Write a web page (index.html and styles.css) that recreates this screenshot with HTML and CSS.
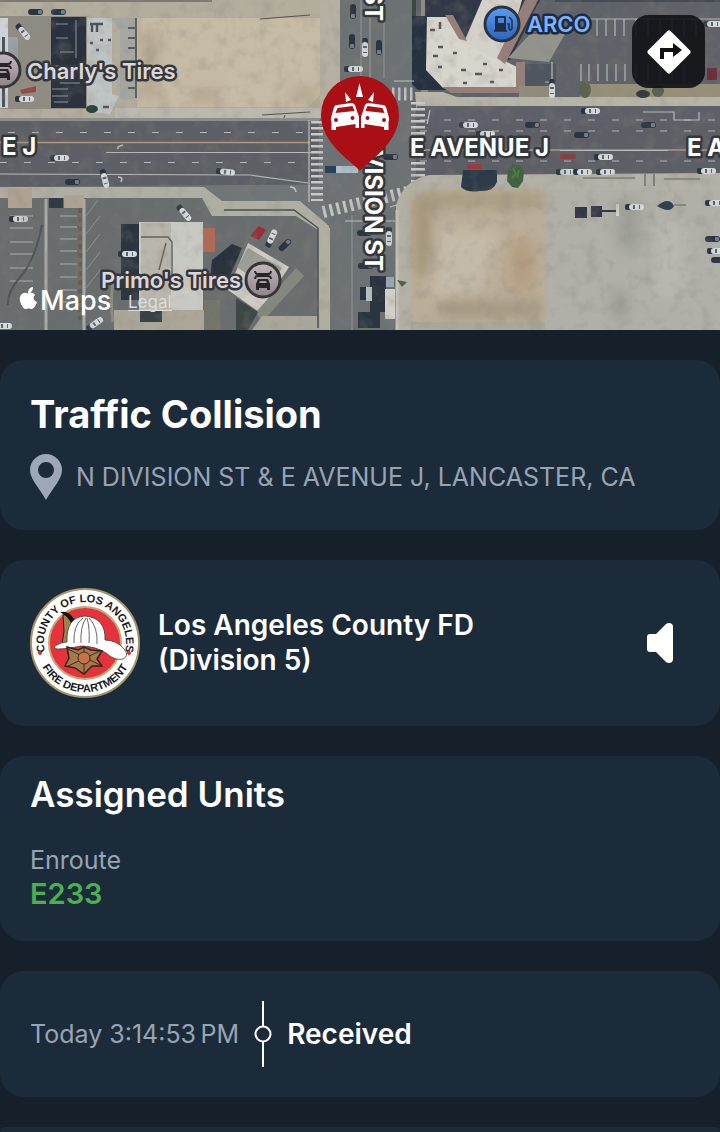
FILE: index.html
```
<!DOCTYPE html>
<html lang="en">
<head>
	<meta charset="UTF-8">
	<meta name="viewport" content="width=device-width, initial-scale=1">
	<title>Traffic Collision</title>
	<link rel="stylesheet" href="styles.css">
</head>
<body>

<header class="map">
	<svg class="map_view" viewBox="0 0 720 330" preserveAspectRatio="xMidYMid slice" role="img" aria-label="Map of N Division St and E Avenue J">
		<defs>
			<filter id="grain" x="0" y="0" width="100%" height="100%">
				<feTurbulence type="fractalNoise" baseFrequency="0.07" numOctaves="5" seed="4"/>
				<feColorMatrix values="0 0 0 0 0.25  0 0 0 0 0.23  0 0 0 0 0.2  2 0 0 0 -0.95"/>
			</filter>
			<filter id="soft"><feGaussianBlur stdDeviation="0.6"/></filter>
			<filter id="patch"><feGaussianBlur stdDeviation="7"/></filter>
			<linearGradient id="service" x1="0" y1="0" x2="0" y2="1">
				<stop offset="0" stop-color="#c3b8bd"/>
				<stop offset="1" stop-color="#8e8489"/>
			</linearGradient>
			<linearGradient id="fuel" x1="0" y1="0" x2="0" y2="1">
				<stop offset="0" stop-color="#5c9df0"/>
				<stop offset="1" stop-color="#2d62b8"/>
			</linearGradient>
			<!-- parked or driving car, facing right -->
			<g id="car">
				<rect x="-11" y="-3" width="12" height="6" rx="2" fill="#2c3540"/>
				<rect x="-7" y="-3" width="15" height="6" rx="3" fill="#d5d9db"/>
				<rect x="-3" y="-2" width="2" height="4" fill="#59626b"/>
				<rect x="3" y="-2" width="1" height="4" fill="#59626b"/>
			</g>
			<g id="darkcar">
				<rect x="-9" y="-3" width="15" height="6" rx="3" fill="#2b3642"/>
				<rect x="1" y="-2" width="4" height="4" rx="1" fill="#737d86"/>
			</g>
			<g id="wrench">
				<path d="M-8-9q0 3 3 3H5q3 0 3-3M-8-1q0-3 3-3H5q3 0 3 3" fill="none" stroke="#28242a" stroke-width="1.800"/>
				<path d="M-7 10V4l2-5H5l2 5v6H4V8h-8v2zM-4 3h8L3 1h-6z" fill="#28242a" fill-rule="evenodd"/>
			</g>
		</defs>

		<g filter="url(#soft)">
			<rect width="720" height="330" fill="#707477"/>

			<!-- north west block -->
			<rect width="338" height="122" fill="#b3ad9e"/>
			<rect y="16" width="87" height="93" fill="#8f8c83"/>
			<rect y="0" width="212" height="2" fill="#7b7a73"/>
			<rect x="51" y="17" width="35" height="91" fill="#2b333e"/>
			<path d="M56 24h12M56 38h12M60 52h14M52 66h15M60 83h20M52 89h16M52 96h16M54 102h14M76 20v38" stroke="#68747e" stroke-width="1.500"/>
			<rect y="18" width="8" height="90" fill="#ced2d6"/>
			<rect x="8" y="37" width="10" height="45" fill="#9ba0a4"/>
			<rect x="2" y="37" width="3" height="70" fill="#4c535b"/>
			<path d="M87 18h25v76l7 2-9 18-20-2-3-7z" fill="#bfc4c4"/>
			<path d="M90 24h13M92 24v8M97 24v8M90 43h3M100 40h3M96 50h3M108 40h3M103 107h6" stroke="#4d5357" stroke-width="2.500"/>
			<path d="M112 18h23v81h-15V30z" fill="#a5a7a2"/>
			<path d="M136 18v80M128 28h7M128 38h7M128 48h7M128 88h7" stroke="#3c4145" stroke-width="1.500" fill="none"/>
			<path d="M137 18h183v77l-12 12H137z" fill="#c6bba5"/>
			<path d="M115 108h205v10H115z" fill="#bbb9ae"/>
			<g filter="url(#patch)" opacity=".5">
				<path d="M142 30h14v70h-14z" fill="#988b75"/>
				<path d="M190 90h30v12h-30zM290 88h28v14h-28z" fill="#9e9276"/>
			</g>
			<path d="M260 19l50-4M262 115l48-3M285 115l-4 12" stroke="#555247" stroke-width="1"/>
			<rect x="320" width="20" height="118" fill="#b5b0a2"/>
			<ellipse cx="92" cy="109" rx="6" ry="4" fill="#2b4340"/>
			<use href="#darkcar" x="37" y="12"/>
			<use href="#darkcar" x="60" y="12"/>
			<use href="#car" transform="translate(24 33) rotate(50)"/>
			<use href="#car" x="26" y="99"/>
			<path d="M20 90l16-4v6l-14 2z" fill="#944b45"/>

			<!-- north east block -->
			<rect x="412" width="308" height="108" fill="#5e6267"/>
			<rect x="421" width="7" height="98" fill="#8d8b83"/>
			<path d="M425 0h115l-30 60H425z" fill="#323946"/>
			<path d="M395 16h31v52l22 22h-30l-23-22z" fill="#263040"/>
			<path d="M427 17h22l18 25 52 26v20h-76l-17-18z" fill="#d8d5cd"/>
			<path d="M482 0h40l-18 64-40-22z" fill="#d3d1ca"/>
			<path d="M525 0h13l-33 64-8-6zM445 15h8l14 26-8-2zM442 87h77v6h-68zM516 62h9v31h-9z" fill="#957f78"/>
			<path d="M508 58l22-24h35l-16 28z" fill="#92948b"/>
			<path d="M525 64h31v22h-31z" fill="#50565e"/>
			<path d="M430 30h5M440 22v7M438 47h5M453 53h4M433 56h5M438 67h4M461 70h5M475 74h7M483 64h4M490 82h4M463 83h4M499 70h4" stroke="#5a5653" stroke-width="2.500"/>
			<path d="M398 0h18v16h-18z" fill="#3a4542"/>
			<path d="M584 19h136M597 19v17M606 19v17M615 19v17M624 19v17M636 19v17M648 19v17M660 19v17M672 19v17M684 19v17M696 19v17M581 64v17M589 64v17M598 64v17M607 64v17M616 64v17M625 64v17M636 64v17M648 64v17M660 64v17M672 64v17M684 64v17M552 62v22M545 82h10" stroke="#b4b8b8" stroke-width="1.200" fill="none"/>
			<rect x="555" width="165" height="2" fill="#444b52"/>
			<path d="M580 84h140v13H580z" fill="#969078"/>
			<path d="M519 86h30v11h-30z" fill="#8f8c7c"/>
			<path d="M415 92h28l14 5h263v10H441l-24 12z" fill="#b7b4a8"/>
			<ellipse cx="585" cy="90" rx="6" ry="8" fill="#5c6250"/>
			<ellipse cx="658" cy="91" rx="6" ry="6" fill="#545e4b"/>
			<ellipse cx="643" cy="94" rx="7" ry="4" fill="#333b40"/>
			<use href="#car" transform="translate(552 90) rotate(90)"/>
			<use href="#car" x="714" y="24"/>
			<path d="M707 68h10v12h-10z" fill="#6e2f3b"/>

			<!-- avenue -->
			<path d="M0 120h720v61L0 187z" fill="#5b5f65"/>
			<path d="M417 106h303v17H413z" fill="#5d6167"/>
			<rect y="118" width="325" height="3" fill="#8c8e8c"/>
			<path d="M0 142.500h310M420 150h300" stroke="#b1987c" stroke-width="1.500"/>
			<path d="M106 152.500h205M0 174l250 1M250 175l58 8M560 150.500h108M643 112h31v8h25v-8" stroke="#b7bab9" stroke-width="1.200" fill="none"/>
			<path d="M8 132.500h300M420 120h300M420 131h300" stroke="#b3b8bb" stroke-width="1.200" stroke-dasharray="7 17"/>
			<path d="M0 162.500h310M420 161h300" stroke="#b3b8bb" stroke-width="1.200" stroke-dasharray="7 17"/>
			<path d="M118 149c-1-3 3-3 5-4M118 177c5 0 4 3 3 5M290 187c5 0 5 2 6 5" stroke="#c2c5c5" stroke-width="1.500" fill="none"/>
			<use href="#car" x="61" y="158"/>
			<use href="#car" transform="translate(227 172) rotate(6)"/>
			<use href="#darkcar" x="74" y="182"/>
			<use href="#car" x="592" y="111"/>
			<use href="#darkcar" x="534" y="125"/>
			<use href="#darkcar" x="650" y="125"/>
			<use href="#car" x="470" y="125"/>
			<use href="#car" x="487" y="134"/>
			<use href="#darkcar" x="583" y="135"/>
			<use href="#car" x="605" y="157"/>
			<path d="M560 154h16v5h-16z" fill="#84403f"/>

			<!-- division street -->
			<path d="M340 0h72v106l4 18v52l-14 24v130h-73V210l-10-20v-70l21-12z" fill="#6c7173"/>
			<path d="M361 0v78M352 215v115M384 0v78" stroke="#8f969a" stroke-width="1"/>
			<path d="M370 0v78" stroke="#a4947f" stroke-width="1.200"/>
			<use href="#darkcar" transform="translate(353 13) rotate(90)"/>
			<use href="#darkcar" transform="translate(352 43) rotate(90)"/>
			<use href="#car" transform="translate(365 49) rotate(90)"/>
			<use href="#darkcar" transform="translate(379 49) rotate(90)"/>
			<use href="#car" x="355" y="69"/>
			<path d="M317 121v80" stroke="#c7cac9" stroke-width="12" stroke-dasharray="2.500 3.500"/>
			<path d="M418 102v80" stroke="#c7cac9" stroke-width="14" stroke-dasharray="2.500 3.500"/>
			<path d="M392 94h22" stroke="#bfc3c3" stroke-width="13" stroke-dasharray="2.500 3.500"/>
			<path d="M323 212l84-20" stroke="#c3c6c5" stroke-width="12" stroke-dasharray="3 4"/>
			<path d="M309 120v82M394 81h20M430 110l-3 14M345 221h50M390 207l17-5" stroke="#c0c4c4" stroke-width="1.200"/>
			<path d="M325 166h20v7h-20z" fill="#2c4056"/>
			<path d="M336 166h22v7h-22z" fill="#aebdc7"/>
			<use href="#darkcar" x="392" y="157"/>

			<!-- south west block -->
			<path d="M0 187h204l18 14h78l29 25v104H0z" fill="#aeaea3"/>
			<path d="M0 198h202l10 18h84l22 14v100H0z" fill="#696d6e"/>
			<path d="M8 188h24v20H8zM64 195h20v13H64z" fill="#b0a292"/>
			<path d="M10 228h23M10 242h23M10 216h23M10 254h23M10 268h23M10 281h23M60 216h17M60 227h17M60 239h17M60 251h17M60 264h17M60 277h17M60 290h17M60 302h17" stroke="#a9adae" stroke-width="1.200"/>
			<path d="M46 199v131M84 199v131" stroke="#a9aba5" stroke-width="3"/>
			<path d="M80 208v112" stroke="#665e49" stroke-width="4" stroke-dasharray="5 4"/>
			<path d="M86 216l12-16M86 234l14-18M86 252l14-18M86 270l14-18M86 288l14-18" stroke="#8d918c" stroke-width="1"/>
			<path d="M42 225q-7 35-21 51T8 305" stroke="#4e5458" stroke-width="2" fill="none"/>
			<path d="M49 198h14v10H49z" fill="#2d3a45"/>
			<path d="M121 224h18v76h-18z" fill="#2b353f"/>
			<path d="M139 222h64v88h-64z" fill="#c9c9c3"/>
			<path d="M141 223h30v86h-30z" fill="#b9b6ac"/>
			<path d="M166 243l-7 27M141 237h27l4 5v38" stroke="#62645f" stroke-width="1.500" fill="none"/>
			<path d="M203 228h12v24h-12z" fill="#b06a55"/>
			<path d="M114 310h90v20h-90z" fill="#aba698"/>
			<path d="M140 310h22v12h-22z" fill="#39424a"/>
			<path d="M113 322q-3-20 0-40" stroke="#8d8b80" stroke-width="3" fill="none"/>
			<path d="M212 260l20-16 10 4-18 42-14-10z" fill="#2b333c"/>
			<path d="M248 243l41 24-30 45-31-22z" fill="#ceccc4"/>
			<path d="M248 248l34 20-14 21-31-22z" fill="#9b9f96"/>
			<path d="M256 312l40-44 8 8-42 46z" fill="#84877d"/>
			<path d="M252 330l10-14h60v14z" fill="#a9a79a"/>
			<path d="M224 210h70l24 18v100" stroke="#474f54" stroke-width="1.500" fill="none"/>
			<path d="M204 300h16v30h-16z" fill="#73756a"/>
			<path d="M236 298l22 14-10 18h-12z" fill="#3d4744"/>
			<use href="#darkcar" transform="translate(286 244) rotate(-45)"/>
			<path d="M250 236l9-10 7 4-7 10z" fill="#9b2d34"/>
			<use href="#car" transform="translate(272 237) rotate(-65)"/>
			<use href="#car" transform="translate(185 214) rotate(50)"/>
			<use href="#car" transform="translate(105 180) rotate(75)"/>
			<use href="#car" x="20" y="219"/>
			<use href="#car" x="129" y="254"/>
			<use href="#car" transform="translate(96 323) rotate(-35)"/>
			<use href="#car" x="4" y="326"/>
			<path d="M320 228h10v102h-10z" fill="#b1aea2"/>

			<!-- south east block -->
			<path d="M396 205q8-26 34-30l290-2v157H396z" fill="#b4b1a6"/>
			<path d="M397 210v120" stroke="#c5c2b7" stroke-width="3"/>
			<path d="M411 205q3-14 20-15h114v140H411z" fill="#bbae98"/>
			<path d="M545 190h175v140H545z" fill="#b0b0a8"/>
			<g filter="url(#patch)" opacity=".75">
				<path d="M414 195h128v10H430v70h-14z" fill="#96896a"/>
				<path d="M440 302h100v14h-100z" fill="#9a8c72"/>
				<path d="M440 230l60 0-20 60-50 10z" fill="#c8bfae"/>
				<path d="M510 240h24v50h-24z" fill="#b29879"/>
				<path d="M618 200h22v50h-22zM612 290h16v30h-16z" fill="#959891"/>
				<path d="M655 220h30v80h-30z" fill="#babab1"/>
			</g>
			<path d="M411 322h134v8H411z" fill="#aaa89c"/>
			<path d="M463 170h34v12q-4 10-17 9-13 2-19-4z" fill="#2e3a47"/>
			<path d="M467 164h14v5h-14z" fill="#993b40"/>
			<path d="M508 168l5-4 6 1 5 6-1 10-5 7-6-1-5-6z" fill="#41623f"/>
			<path d="M513 168l3 6-4 4M519 170l-2 8" stroke="#53784d" stroke-width="2" fill="none"/>
			<path d="M575 207h12v11h-12zM591 206h11v11h-11zM602 210h16v2h-16z" fill="#313945"/>
			<rect x="616" y="204" width="3" height="12" fill="#d1d2ce"/>
			<path d="M657 206q12-10 17 0-4 8-17 0z" fill="#33414e"/>
			<path d="M674 205h12M583 178h52M645 174v12M654 174v12M664 179h36" stroke="#5f6361" stroke-width="1.200"/>
			<use href="#car" x="636" y="207"/>
			<use href="#car" x="567" y="172"/>
			<use href="#car" x="584" y="172"/>
			<use href="#car" x="607" y="172"/>
			<use href="#car" x="708" y="171"/>
			<use href="#car" x="716" y="203"/>
			<use href="#darkcar" x="714" y="239"/>
			<use href="#car" x="718" y="251"/>
			<use href="#darkcar" x="720" y="260"/>
			<use href="#darkcar" x="366" y="233"/>
			<use href="#car" transform="translate(389 238) rotate(90)"/>
			<use href="#darkcar" x="367" y="266"/>
			<path d="M370 276h16v36h-16zM358 312h22v16h-22zM360 287h12v13h-12z" fill="#2c3641"/>
			<path d="M385 289h10v30h-10z" fill="#d2d0ca"/>
			<rect x="386" y="277" width="8" height="10" fill="#97a6b0"/>
			<rect x="366" y="287" width="6" height="14" fill="#b4bdc3"/>
			<path d="M397 280l10 2-5 5z" fill="#50634c"/>
		</g>
		<rect width="720" height="330" filter="url(#grain)" opacity=".35"/>

		<!-- street names -->
		<g class="street">
			<text x="2" y="155">E J</text>
			<text x="410" y="156">E AVENUE J</text>
			<text x="687" y="156">E A</text>
			<text transform="translate(365 271) rotate(90)" text-anchor="end">N DIVISION ST</text>
			<text transform="translate(365 21) rotate(90)" text-anchor="end">ST</text>
		</g>

		<!-- places -->
		<circle cx="3" cy="70" r="17" fill="url(#service)" stroke="#37343a" stroke-width="3"/>
		<use href="#wrench" x="3" y="70"/>
		<text class="place" x="27" y="79">Charly's Tires</text>
		<circle cx="263" cy="280" r="17" fill="url(#service)" stroke="#37343a" stroke-width="3"/>
		<use href="#wrench" x="263" y="280"/>
		<text class="place" x="101" y="288">Primo's Tires</text>
		<circle cx="502" cy="24" r="17" fill="url(#fuel)" stroke="#263446" stroke-width="3"/>
		<path d="M495 31V17q0-1 1-1h9q1 0 1 1v14zM498 18v5h6v-5z" fill="#1e2e48" fill-rule="evenodd"/>
		<path d="M494 31h13M507 24h2v4q0 2 1.500 2t1.500-2v-8l-3-3" fill="none" stroke="#1e2e48" stroke-width="1.500"/>
		<text class="place fuel" x="527" y="32">ARCO</text>

		<!-- map brand -->
		<path d="M35 295c-2-3-5-3-7-1.500-2-1-4-1-6 .5-4 3-2 10 1.500 14 2 2 3 .5 5 .5s3 1.500 5-.5c2-2 3-4 3.500-6-4-1.500-4-5-2-7zM28 293c0-3 2-6 5-6 .3 3-2 6-5 6z" fill="#fff"/>
		<text class="brand" x="40" y="310">Maps</text>
		<a href="#legal">
			<text class="legal" x="128" y="308">Legal</text>
			<path d="M128 310.500h44" stroke="#dcdedd"/>
		</a>

		<!-- incident marker -->
		<path d="M360 171c-6-8-39-27-39-56a39 39 0 0 1 78 0c0 29-33 48-39 56z" fill="#a90f14"/>
		<g fill="#fff">
			<path d="M359.500 83l3.500 14h-7zM345 92l6 8-5 2zM374 92l-1 10-5-2z"/>
			<path id="crashcar" fill-rule="evenodd" d="M331 118l3-11q1-2 3-2l14-2q3 0 4 2l3 9q1 2 1 4v10h-3.500v-4L336 127v3h-4.500v-8q-1-2-.500-4zM335.500 113l19-2-2-5-15 2zM334 120a2 2 0 1 0 4 0a2 2 0 1 0-4 0zM350.500 118a2 2 0 1 0 4 0a2 2 0 1 0-4 0z"/>
			<use href="#crashcar" transform="translate(720 0) scale(-1 1)"/>
		</g>
	</svg>
	<button class="directions" type="button" aria-label="Directions">
		<svg viewBox="0 0 46 46" width="46" height="46">
			<path d="M21.500 2Q23 .5 24.500 2L44 21.500q1.500 1.500 0 3L24.500 44q-1.500 1.500-3 0L2 24.500q-1.500-1.500 0-3z" fill="#fff"/>
			<path d="M16 30v-9h11" fill="none" stroke="#111" stroke-width="4"/>
			<path d="M27 14l9 7-9 7z" fill="#111"/>
		</svg>
	</button>
</header>

<main class="cards">
	<section class="card incident">
		<h1>Traffic Collision</h1>
		<p class="address">
			<svg viewBox="0 0 32 46" width="32" height="46" aria-hidden="true">
				<path fill="#9ca8b6" fill-rule="evenodd" d="M16 0a16 16 0 0 1 16 16c0 9-8 16-16 30C8 32 0 25 0 16A16 16 0 0 1 16 0zM8 16a8 8 0 1 0 16 0a8 8 0 1 0-16 0z"/>
			</svg>
			<span>N DIVISION ST &amp; E AVENUE J, LANCASTER, CA</span>
		</p>
	</section>

	<section class="card agency">
		<svg class="seal" viewBox="0 0 110 110" width="110" height="110" role="img" aria-label="County of Los Angeles Fire Department">
			<defs>
				<path id="top_arc" d="M15 64A41 41 0 1 1 95 64"/>
				<path id="bottom_arc" d="M7 65A49 49 0 0 0 103 65"/>
			</defs>
			<circle cx="55" cy="55" r="54" fill="#fff" stroke="#a3946a" stroke-width="2"/>
			<circle cx="55" cy="55" r="36" fill="#e5333b" stroke="#c2a878" stroke-width="2"/>
			<text class="seal_text" text-anchor="middle"><textPath href="#top_arc" startOffset="50%">COUNTY OF LOS ANGELES</textPath></text>
			<text class="seal_text" text-anchor="middle"><textPath href="#bottom_arc" startOffset="50%">FIRE DEPARTMENT</textPath></text>
			<path d="M10 63l2 2-2 2-2-2zM99 63l2 2-2 2-2-2z" fill="#e5333b" stroke="#e5333b"/>
			<path d="M33 27q6-2 10 4l-5 26h-6l2-14z" fill="#9d8250" stroke="#2b2115"/>
			<path d="M30 24q9-2 15 8l-3 5q-3-8-12-13z" fill="#17130f"/>
			<path d="M25 58q6-4 12-4-1-25 18-26 21 2 20 24 12 0 20 10 4 6-2 9-8 2-17-6-11-7-25-7-14 3-23 3-5 0-3-3z" fill="#fff" stroke="#453b32" stroke-width=".8"/>
			<path d="M44 55q-1-18 9-25M51 55q-1-16 5-25M59 55q1-15-2-25M67 56q1-17-8-26" fill="none" stroke="#6b6865" stroke-width="1"/>
			<path d="M37 59l11 3 6-3 7 3 11 1-5 8 5 7-10 0-8 8-9-6-10-2 4-8z" fill="#a4794b" stroke="#322217" stroke-width="1.500"/>
			<path d="M38 61l32 16M70 63L38 78M54 58v27" stroke="#3f2d1d" stroke-width="1"/>
			<circle cx="54" cy="70" r="6" fill="#c9714b" stroke="#3f2d1d"/>
		</svg>
		<h2>Los Angeles County FD<br>(Division 5)</h2>
		<button class="speaker" type="button" aria-label="Listen">
			<svg viewBox="0 0 28 42" width="28" height="42">
				<path d="M4 12h6L20 2q3-2 6 0 1 1 1 3v32q0 2-1 3-3 2-6 0L10 30H4q-3 0-3-3V15q0-3 3-3z" fill="#fff"/>
			</svg>
		</button>
	</section>

	<section class="card units">
		<h2>Assigned Units</h2>
		<p class="status">Enroute</p>
		<p class="unit">E233</p>
	</section>

	<section class="card timeline">
		<time>Today 3:14:53&#8239;PM</time>
		<svg viewBox="0 0 18 66" width="18" height="66" aria-hidden="true">
			<path d="M9 0v26M9 40v26" stroke="#fff" stroke-width="2"/>
			<circle cx="9" cy="33" r="7.500" fill="none" stroke="#fff" stroke-width="2"/>
		</svg>
		<strong>Received</strong>
	</section>

	<section class="card more"></section>
</main>

</body>
</html>
```

FILE: styles.css
```
*{
	padding:0;
	margin:0;
	box-sizing:border-box;
}
body{
	display:flex;
	flex-direction:column;
	min-height:100vh;
	background:#15202b;
	color:#fff;
	font-family:Inter,"Liberation Sans",sans-serif;
}
button{
	border:0;
	background:none;
	cursor:pointer;
}
svg{
	display:block;
	flex-shrink:0;
}

/* map */
.map{
	position:relative;
}
.map_view{
	width:100%;
	height:330px;
}
.street{
	font-size:24px;
	font-weight:700;
}
.street text,
.place{
	fill:#fff;
	stroke:#34373b;
	stroke-width:5px;
	stroke-linejoin:round;
	paint-order:stroke;
}
.place{
	font-size:22px;
	font-weight:600;
	fill:#dcd6da;
}
.place.fuel{
	fill:#7db3fa;
	stroke:#1d2b40;
}
.brand{
	font-size:27px;
	font-weight:500;
	fill:#fff;
}
.legal{
	font-size:17px;
	fill:#dcdedd;
}
.directions{
	position:absolute;
	top:15px;
	right:15px;
	display:flex;
	align-items:center;
	justify-content:center;
	width:73px;
	height:73px;
	border-radius:16px;
	background:rgba(13,15,18,.88);
}

/* cards */
.cards{
	flex:1;
	display:flex;
	flex-direction:column;
	gap:30px;
	padding-top:30px;
}
.card{
	padding:30px;
	border-radius:24px;
	background:#1c2b3a;
}
.incident h1{
	font-size:38px;
	line-height:48px;
	font-weight:700;
}
.address{
	display:flex;
	align-items:center;
	gap:14px;
	margin-top:16px;
	color:#98a4b3;
	font-size:25px;
	line-height:32px;
}
.agency{
	display:flex;
	align-items:center;
	gap:18px;
	padding-top:28px;
	padding-bottom:28px;
}
.seal_text{
	font-family:"Liberation Sans",Arial,sans-serif;
	font-size:11px;
	font-weight:700;
	fill:#1b1a1c;
}
.agency h2{
	flex:1;
	font-size:28px;
	line-height:35px;
	font-weight:600;
}
.speaker{
	margin-right:16px;
}
.units{
	padding-top:16px;
}
.units h2{
	font-size:35px;
	line-height:44px;
	font-weight:600;
}
.status{
	margin-top:28px;
	color:#98a4b3;
	font-size:25px;
	line-height:32px;
}
.unit{
	color:#4caf50;
	font-size:29px;
	line-height:35px;
	font-weight:600;
}
.timeline{
	display:flex;
	align-items:center;
	gap:15px;
}
.timeline time{
	color:#98a4b3;
	font-size:25px;
}
.timeline strong{
	font-size:28px;
	font-weight:600;
}
.more{
	flex:1;
	padding:0;
	border-radius:24px 24px 0 0;
}
```
